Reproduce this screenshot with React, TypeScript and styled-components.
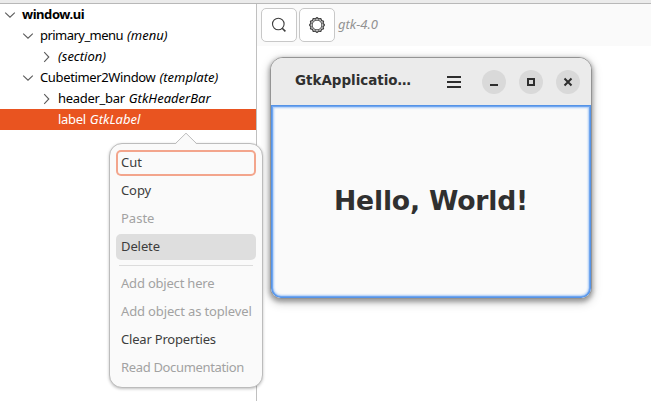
import React from 'react';
import styled, { createGlobalStyle, css } from 'styled-components';

const GlobalStyle = createGlobalStyle`
  * { box-sizing: border-box; }
  body { margin: 0; background: #fff; overflow: hidden; }
`;

const Page = styled.div`
  position: relative;
  width: 651px;
  height: 401px;
  display: flex;
  flex-direction: column;
  background: #fff;
  font: 13px/21px 'Noto Sans', sans-serif;
  color: #000;
  overflow: hidden;
`;

const TopEdge = styled.div`
  height: 4px;
  flex: none;
  background: #ebebeb;
  border-bottom: 1px solid #b8b8b8;
`;

const Body = styled.div`
  flex: 1;
  display: flex;
`;

const Sidebar = styled.div`
  width: 257px;
  flex: none;
  border-right: 1px solid #c0c0c0;
`;

const TreeRow = styled.div<{ $depth: number; $selected?: boolean }>`
  height: 21px;
  display: flex;
  align-items: center;
  padding-left: ${p => 4 + p.$depth * 18}px;
  white-space: pre;
  ${p => p.$selected && css`
    background: #e95420;
    color: #fff;
  `}
`;

const Arrow = styled.svg`
  width: 12px;
  height: 12px;
  flex: none;
  margin-right: 5px;
  fill: none;
  stroke: #5c5c5c;
  stroke-width: 1.1;
`;

const Name = styled.span<{ $bold?: boolean; $tracking?: number }>`
  font-weight: ${p => (p.$bold ? 700 : 400)};
  letter-spacing: ${p => p.$tracking ?? 0}px;
  padding-left: 1px;
`;

const Kind = styled.span`
  font-style: italic;
  margin-left: 4px;
  &:only-of-type { margin-left: 1px; }
`;

const Content = styled.div`
  flex: 1;
`;

const Toolbar = styled.div`
  height: 42px;
  display: flex;
  align-items: center;
  gap: 2px;
  padding-left: 4px;
  background: #fafafa;
`;

const ToolButton = styled.button`
  width: 36px;
  height: 34px;
  padding: 0;
  display: grid;
  place-items: center;
  background: #fff;
  border: 1px solid #c8c8c8;
  border-radius: 5px;
  svg { display: block; fill: none; stroke: #3d3d3d; }
`;

const Version = styled.span`
  color: #929292;
  font-style: italic;
  margin-left: 1px;
  padding-bottom: 2px;
`;

const Preview = styled.div`
  width: 322px;
  height: 242px;
  margin: 11px 0 0 13px;
  display: flex;
  flex-direction: column;
  border: 1px solid #949494;
  border-radius: 13px 13px 11px 11px;
  overflow: hidden;
  background: #fafafa;
  box-shadow: 0 2px 4px 1px rgba(0, 0, 0, 0.3), 0 3px 10px 2px rgba(0, 0, 0, 0.15);
  color: #303030;
  font-family: 'DejaVu Sans', sans-serif;
`;

const HeaderBar = styled.div`
  height: 47px;
  flex: none;
  display: flex;
  align-items: center;
  background: #ebebeb;
  padding-left: 24px;
`;

const Title = styled.span`
  width: 118px;
  font-weight: 700;
  font-size: 13.45px;
  padding-bottom: 2px;
  white-space: nowrap;
`;

const MenuIcon = styled.svg`
  width: 16px;
  height: 16px;
  margin: 0 20px 0 33px;
  fill: #2e2e2e;
`;

const WindowButtons = styled.div`
  display: flex;
  gap: 13px;
`;

const RoundButton = styled.span`
  width: 24px;
  height: 24px;
  border-radius: 50%;
  background: #d9d9d9;
  svg { display: block; fill: none; stroke: #2e2e2e; stroke-width: 2; }
`;

const Canvas = styled.div`
  flex: 1;
  display: grid;
  place-items: center;
  padding-bottom: 2px;
  border-radius: 0 0 10px 10px;
  box-shadow: inset 0 0 0 1px #5593e6, inset 0 0 0 2px #6fa5ef, inset 0 0 2px 3px #a9cbf7;
  font-weight: 700;
  font-size: 26.67px;
  letter-spacing: -0.2px;
`;

const Popover = styled.div`
  position: absolute;
  left: 109px;
  top: 143px;
  width: 154px;
  height: 245px;
  padding: 6px;
  display: flex;
  flex-direction: column;
  gap: 2px;
  background: #fafafa;
  border: 1px solid #bcbcbc;
  border-radius: 13px;
  box-shadow: 0 1px 3px rgba(0, 0, 0, 0.25);
`;

const Pointer = styled.svg`
  position: absolute;
  left: 64px;
  top: -12px;
  width: 24px;
  height: 13px;
`;

const MenuItem = styled.div<{ $state?: string; $tracking?: number; $raised?: boolean }>`
  height: 26px;
  flex: none;
  padding: 0 0 ${p => (p.$raised ? 2 : 0)}px 5px;
  display: flex;
  align-items: center;
  white-space: nowrap;
  border-radius: 5px;
  color: ${p => (p.$state === 'disabled' ? '#a2a2a2' : '#3d3d3d')};
  letter-spacing: ${p => p.$tracking ?? 0}px;
  ${p => p.$state === 'focused' && css`box-shadow: inset 0 0 0 2px #f3a58c;`}
  ${p => p.$state === 'hovered' && css`background: #dedede;`}
`;

const Separator = styled.div`
  height: 1px;
  flex: none;
  margin: 3px 3px 2px;
  background: #dcdcdc;
`;

interface Node {
  depth: number;
  arrow?: 'open' | 'closed';
  name?: string;
  kind?: string;
  bold?: boolean;
  tracking?: number;
  selected?: boolean;
}

const tree: Node[] = [
  { depth: 0, arrow: 'open', name: 'window.ui', bold: true, tracking: -0.45 },
  { depth: 1, arrow: 'open', name: 'primary_menu', kind: '(menu)', tracking: -0.54 },
  { depth: 2, arrow: 'closed', kind: '(section)' },
  { depth: 1, arrow: 'open', name: 'Cubetimer2Window', kind: '(template)', tracking: -0.36 },
  { depth: 2, arrow: 'closed', name: 'header_bar', kind: 'GtkHeaderBar', tracking: -0.3 },
  { depth: 2, name: 'label', kind: 'GtkLabel', selected: true, tracking: -0.3 },
];

const upperItems = [
  { label: 'Cut', state: 'focused' },
  { label: 'Copy', tracking: -0.1 },
  { label: 'Paste', state: 'disabled' },
  { label: 'Delete', state: 'hovered', tracking: -0.1 },
];

const lowerItems = [
  { label: 'Add object here', state: 'disabled', tracking: -0.2 },
  { label: 'Add object as toplevel', state: 'disabled', tracking: -0.14 },
  { label: 'Clear Properties', tracking: -0.2 },
  { label: 'Read Documentation', state: 'disabled', tracking: -0.34 },
];

const gearPath = Array.from({ length: 72 }, (_, i) => {
  const a = (i / 72) * Math.PI * 2;
  const r = 6.8 + 0.6 * Math.cos(a * 12);
  return `${i ? 'L' : 'M'}${(8 + r * Math.cos(a)).toFixed(2)} ${(8 + r * Math.sin(a)).toFixed(2)}`;
}).join('') + 'Z';

export default function App() {
  return (
    <Page>
      <GlobalStyle />
      <TopEdge />
      <Body>
        <Sidebar>
          {tree.map((n, i) => (
            <TreeRow key={i} $depth={n.depth} $selected={n.selected}>
              <Arrow viewBox="0 0 12 12">
                {n.arrow === 'open' && <path d="M1.2 3.6 6 8.2l4.8-4.6" />}
                {n.arrow === 'closed' && <path d="M4.2 1.2 8.8 6l-4.6 4.8" />}
              </Arrow>
              {n.name && <Name $bold={n.bold} $tracking={n.tracking}>{n.name}</Name>}
              {n.kind && <Kind>{n.kind}</Kind>}
            </TreeRow>
          ))}
        </Sidebar>
        <Content>
          <Toolbar>
            <ToolButton aria-label="Search">
              <svg width="16" height="16" viewBox="0 0 16 16" strokeWidth="1.1">
                <circle cx="7.3" cy="7" r="5.8" />
                <path d="m11.2 11.2 3.2 3.2" strokeWidth="1.6" />
              </svg>
            </ToolButton>
            <ToolButton aria-label="Settings">
              <svg width="16" height="16" viewBox="0 0 16 16">
                <path d={gearPath} strokeWidth="1.3" />
                <circle cx="8" cy="8" r="4.9" strokeWidth="1" />
              </svg>
            </ToolButton>
            <Version>gtk-4.0</Version>
          </Toolbar>
          <Preview>
            <HeaderBar>
              <Title>GtkApplicatio…</Title>
              <MenuIcon viewBox="0 0 16 16">
                <path d="M1 2h14v2H1zM1 7h14v2H1zM1 12h14v2H1z" />
              </MenuIcon>
              <WindowButtons>
                <RoundButton>
                  <svg width="24" height="24"><path d="M8 15h8" /></svg>
                </RoundButton>
                <RoundButton>
                  <svg width="24" height="24"><path d="M9 9h6v6H9z" /></svg>
                </RoundButton>
                <RoundButton>
                  <svg width="24" height="24"><path d="m8.5 8.5 7 7m0-7-7 7" /></svg>
                </RoundButton>
              </WindowButtons>
            </HeaderBar>
            <Canvas>Hello, World!</Canvas>
          </Preview>
        </Content>
      </Body>
      <Popover>
        <Pointer viewBox="0 0 24 13">
          <path d="M1 12.5 12 1.5l11 11" fill="#fafafa" />
          <path d="M0.5 11.5h1L12 1.2l10.5 10.3h1" fill="none" stroke="#bcbcbc" />
        </Pointer>
        {upperItems.map(m => (
          <MenuItem key={m.label} $state={m.state} $tracking={m.tracking} $raised>{m.label}</MenuItem>
        ))}
        <Separator />
        {lowerItems.map(m => (
          <MenuItem key={m.label} $state={m.state} $tracking={m.tracking}>{m.label}</MenuItem>
        ))}
      </Popover>
    </Page>
  );
}
